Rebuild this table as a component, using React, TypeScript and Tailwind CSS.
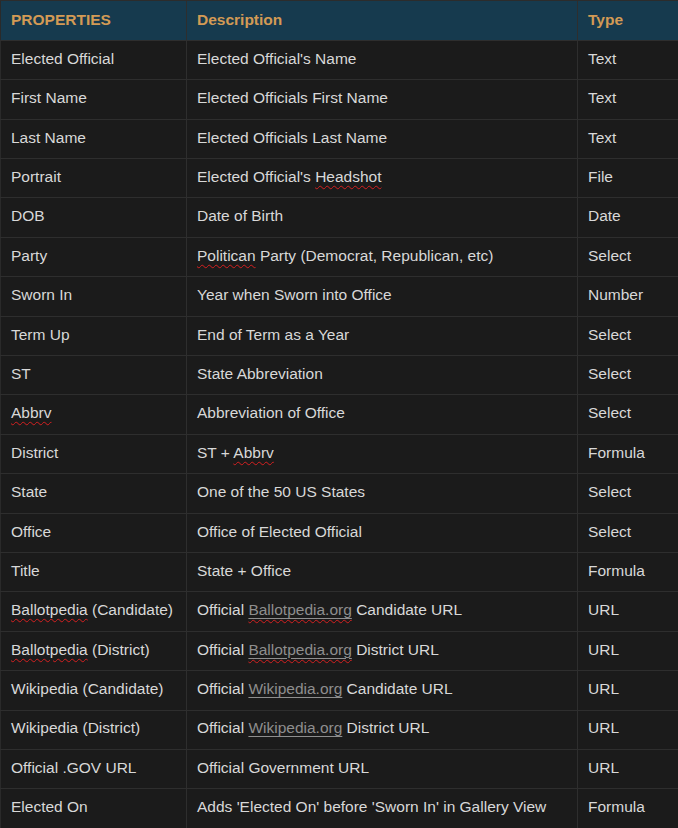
import React from "react";

type Cell = React.ReactNode;

const Spell = ({ children }: { children: React.ReactNode }) => (
  <span className="underline decoration-wavy decoration-[#d42020] decoration-1 underline-offset-[3px]">{children}</span>
);

const LinkT = ({ children, spell }: { children: React.ReactNode; spell?: boolean }) => (
  <span className="text-[#8e8e8e] underline decoration-[#8e8e8e] decoration-1 underline-offset-[3px]">
    {spell ? <span className="underline decoration-wavy decoration-[#d42020] decoration-1 underline-offset-[4px]">{children}</span> : children}
  </span>
);

const rows: [Cell, Cell, Cell][] = [
  ["Elected Official", "Elected Official's Name", "Text"],
  ["First Name", "Elected Officials First Name", "Text"],
  ["Last Name", "Elected Officials Last Name", "Text"],
  ["Portrait", <>Elected Official's <Spell>Headshot</Spell></>, "File"],
  ["DOB", "Date of Birth", "Date"],
  ["Party", <><Spell>Politican</Spell> Party (Democrat, Republican, etc)</>, "Select"],
  ["Sworn In", "Year when Sworn into Office", "Number"],
  ["Term Up", "End of Term as a Year", "Select"],
  ["ST", "State Abbreviation", "Select"],
  [<Spell>Abbrv</Spell>, "Abbreviation of Office", "Select"],
  ["District", <>ST + <Spell>Abbrv</Spell></>, "Formula"],
  ["State", "One of the 50 US States", "Select"],
  ["Office", "Office of Elected Official", "Select"],
  ["Title", "State + Office", "Formula"],
  [<><Spell>Ballotpedia</Spell> (Candidate)</>, <>Official <LinkT spell>Ballotpedia.org</LinkT> Candidate URL</>, "URL"],
  [<><Spell>Ballotpedia</Spell> (District)</>, <>Official <LinkT spell>Ballotpedia.org</LinkT> District URL</>, "URL"],
  ["Wikipedia (Candidate)", <>Official <LinkT>Wikipedia.org</LinkT> Candidate URL</>, "URL"],
  ["Wikipedia (District)", <>Official <LinkT>Wikipedia.org</LinkT> District URL</>, "URL"],
  ["Official .GOV URL", "Official Government URL", "URL"],
  ["Elected On", "Adds 'Elected On' before 'Sworn In' in Gallery View", "Formula"],
];

export default function App() {
  return (
    <div
      className="w-[678px] h-[828px] overflow-hidden bg-[#1b1b1b] border-t border-[#2c2c2c]"
      style={{ fontFamily: '"Liberation Sans", Arial, sans-serif' }}
    >
      <table className="w-[678px] border-collapse table-fixed text-[15.5px] leading-none">
        <colgroup>
          <col className="w-[186px]" />
          <col className="w-[391px]" />
          <col />
        </colgroup>
        <thead>
          <tr className="h-[39.4px] bg-[#163a4e]">
            <th className="text-left font-bold text-[#d39a55] pl-[10px] pb-[2px] border border-[#2e2e2e] border-t-0 border-l-[#2a2a2a]">PROPERTIES</th>
            <th className="text-left font-bold text-[#d39a55] pl-[10px] pb-[2px] border border-[#2e2e2e] border-t-0">Description</th>
            <th className="text-left font-bold text-[#d39a55] pl-[10px] pb-[2px] border border-[#2e2e2e] border-t-0 border-r-0">Type</th>
          </tr>
        </thead>
        <tbody>
          {rows.map((r, i) => (
            <tr key={i} className="h-[39.4px] text-[#d8d8d8]">
              <td className="pl-[10px] pb-[3px] border border-[#2e2e2e] border-l-[#2a2a2a] whitespace-nowrap">{r[0]}</td>
              <td className="pl-[10px] pb-[3px] border border-[#2e2e2e] whitespace-nowrap">{r[1]}</td>
              <td className="pl-[10px] pb-[3px] border border-[#2e2e2e] border-r-0 whitespace-nowrap">{r[2]}</td>
            </tr>
          ))}
        </tbody>
      </table>
    </div>
  );
}
